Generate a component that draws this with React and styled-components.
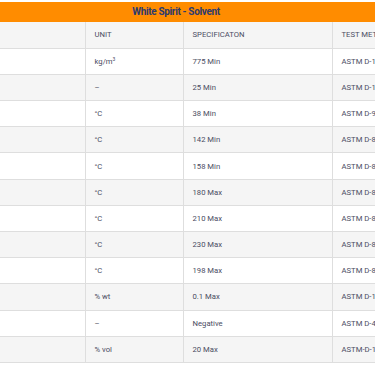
import React from 'react';
import styled, { createGlobalStyle } from 'styled-components';

const GlobalStyle = createGlobalStyle`
  html, body {
    margin: 0;
    padding: 0;
    background: #ffffff;
  }
  body {
    font-family: Roboto, "Liberation Sans", sans-serif;
  }
`;

const Wrapper = styled.div`
  width: 375px;
  height: 366px;
  overflow: hidden;
  padding-top: 2px;
  box-sizing: border-box;
  background: #fff;
`;

const Title = styled.div`
  width: 375px;
  height: 20px;
  background: #ff8c00;
  color: #2d3a6e;
  font-weight: 700;
  font-size: 10px;
  letter-spacing: -0.35px;
  line-height: 20px;
  text-align: center;
  padding-right: 23px;
  box-sizing: border-box;
`;

const Table = styled.table`
  border-collapse: collapse;
  table-layout: fixed;
  width: 460px;
  font-size: 7.7px;
  color: #4a4c62;
`;

const Row = styled.tr`
  background: ${(p) => (p.$shaded ? '#f5f5f5' : '#ffffff')};
  border-bottom: 1px solid #dedede;
`;

const Cell = styled.td`
  height: 26.2px;
  padding: 0 9px;
  box-sizing: border-box;
  border-left: ${(p) => (p.$first ? 'none' : '1px solid #dedede')};
  white-space: nowrap;
  overflow: hidden;
  vertical-align: middle;
  text-transform: ${(p) => (p.$head ? 'uppercase' : 'none')};

  sup {
    font-size: 5px;
    vertical-align: 3px;
  }
`;

const rows = [
  [<>kg/m<sup>3</sup></>, '775 Min', 'ASTM D-1298'],
  ['–', '25 Min', 'ASTM D-156'],
  ['°C', '38 Min', 'ASTM D-93'],
  ['°C', '142 Min', 'ASTM D-86'],
  ['°C', '158 Min', 'ASTM D-86'],
  ['°C', '180 Max', 'ASTM D-86'],
  ['°C', '210 Max', 'ASTM D-86'],
  ['°C', '230 Max', 'ASTM D-86'],
  ['°C', '198 Max', 'ASTM D-86'],
  ['% wt', '0.1 Max', 'ASTM D-1266'],
  ['–', 'Negative', 'ASTM D-4952'],
  ['% vol', '20 Max', 'ASTM-D-1319'],
];

export default function App() {
  return (
    <Wrapper>
      <GlobalStyle />
      <Title>White Spirit - Solvent</Title>
      <Table>
        <colgroup>
          <col style={{ width: 85 }} />
          <col style={{ width: 98 }} />
          <col style={{ width: 149 }} />
          <col style={{ width: 128 }} />
        </colgroup>
        <tbody>
          <Row $shaded>
            <Cell $first $head></Cell>
            <Cell $head>Unit</Cell>
            <Cell $head>Specificaton</Cell>
            <Cell $head>Test Method</Cell>
          </Row>
          {rows.map((r, i) => (
            <Row key={i} $shaded={i % 2 === 1}>
              <Cell $first></Cell>
              <Cell>{r[0]}</Cell>
              <Cell>{r[1]}</Cell>
              <Cell>{r[2]}</Cell>
            </Row>
          ))}
        </tbody>
      </Table>
    </Wrapper>
  );
}
